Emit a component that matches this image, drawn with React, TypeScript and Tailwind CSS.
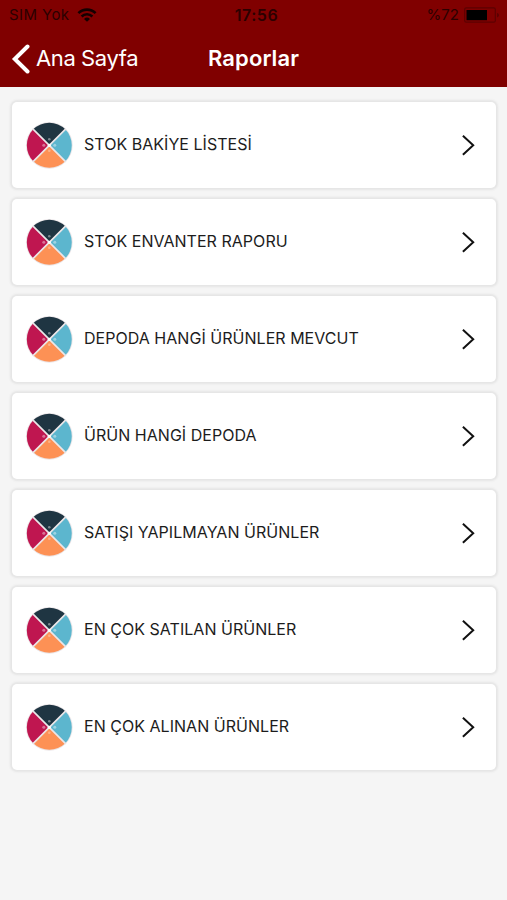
type Report = {
  id: number;
  title: string;
};

const reports: Report[] = [
  { id: 1, title: 'STOK BAKİYE LİSTESİ' },
  { id: 2, title: 'STOK ENVANTER RAPORU' },
  { id: 3, title: 'DEPODA HANGİ ÜRÜNLER MEVCUT' },
  { id: 4, title: 'ÜRÜN HANGİ DEPODA' },
  { id: 5, title: 'SATIŞI YAPILMAYAN ÜRÜNLER' },
  { id: 6, title: 'EN ÇOK SATILAN ÜRÜNLER' },
  { id: 7, title: 'EN ÇOK ALINAN ÜRÜNLER' },
];

function WifiIcon() {
  return (
    <svg className="ml-[8px] h-[14px] w-5" viewBox="0 0 20 14" fill="none" stroke="#140000">
      <path d="M1.4 5.2a12.2 12.2 0 0 1 17.2 0" strokeWidth="2.6" />
      <path d="M4.6 8.5a7.7 7.7 0 0 1 10.8 0" strokeWidth="2.5" />
      <path d="M10 13.8 7 10.9a4.3 4.3 0 0 1 6 0z" fill="#140000" stroke="none" />
    </svg>
  );
}

function BatteryIcon() {
  return (
    <svg className="ml-[5px] h-4 w-9" viewBox="0 0 36 16">
      <rect x="0.7" y="0.8" width="30.6" height="14.4" rx="1.5" fill="none" stroke="#5c0000" strokeWidth="1.2" />
      <rect x="2.5" y="3" width="20.5" height="10.2" fill="#000" />
      <path d="M33 6v4.4c1.3-.4 2-1.2 2-2.2s-.7-1.8-2-2.2z" fill="#5c0000" />
    </svg>
  );
}

function PieIcon() {
  return (
    <svg className="size-12 shrink-0" viewBox="0 0 48 48">
      <g transform="translate(.3 .3)">
        <circle cx="24" cy="24" r="23.4" fill="#ebe6e8" />
        <path d="M24 24 8 8a23 23 0 0 1 32 0z" fill="#1f3542" />
        <path d="M24 24 40 8a23 23 0 0 1 0 32z" fill="#5cb6ce" />
        <path d="M24 24 40 40a23 23 0 0 1-32 0z" fill="#fd9155" />
        <path d="M24 24 8 40a23 23 0 0 1 0-32z" fill="#bf1650" />
        <path d="M7.5 7.5l33 33M40.5 7.5l-33 33" stroke="#ebe6e8" strokeWidth="1.7" />
        <g fill="#fff">
          <circle cx="24" cy="24" r="1.6" />
          <circle cx="24" cy="18" r="1.3" opacity=".4" />
          <circle cx="18.5" cy="24" r="1.5" opacity=".4" />
          <circle cx="29.5" cy="24" r="1.5" opacity=".4" />
          <circle cx="24" cy="29.5" r="1.3" opacity=".3" />
        </g>
      </g>
    </svg>
  );
}

function Header() {
  return (
    <header className="h-[87px] bg-[#800000]">
      <div className="grid h-[30px] grid-cols-3 items-center px-[7px] text-[15px] text-[#2b0000]">
        <div className="flex items-center pl-[2px]">
          <span className="tracking-[0.4px]">SIM Yok</span>
          <WifiIcon />
        </div>
        <div className="pl-[6px] text-center text-base font-semibold tracking-[0.5px]">17:56</div>
        <div className="flex items-center justify-end">
          <span>%72</span>
          <BatteryIcon />
        </div>
      </div>
      <div className="grid h-[57px] grid-cols-3 items-center px-[11px] text-white">
        <button className="flex items-center text-[22px] tracking-[-0.4px] whitespace-nowrap">
          <svg className="mr-[6px] h-[30px] w-[19px] shrink-0" viewBox="0 0 19 30" fill="none" stroke="currentColor" strokeWidth="4">
            <path d="M16.5 2.5 3.8 15 16.5 27.5" strokeLinecap="round" />
          </svg>
          Ana Sayfa
        </button>
        <h1 className="text-center text-[22px] font-semibold tracking-[0.1px]">Raporlar</h1>
      </div>
    </header>
  );
}

function ReportRow({ title }: { title: string }) {
  return (
    <li className="flex h-[86px] items-center rounded-[5px] bg-white pr-[20px] pl-[13px] shadow-[0_0_2px_2px_#e5e5e5]">
      <PieIcon />
      <span className="ml-[11px] flex-1 pb-[2px] text-base tracking-[0.03px] text-[#1c1c1c]">{title}</span>
      <svg className="h-6 w-4 shrink-0" viewBox="0 0 16 24" fill="none" stroke="#111" strokeWidth="2">
        <path d="M2.9 2.7 13.2 12.2 2.9 21.7" />
      </svg>
    </li>
  );
}

export default function App() {
  return (
    <div className="h-[900px] w-[507px] overflow-hidden bg-[#f5f5f5] font-['Inter',sans-serif]">
      <Header />
      <ul className="flex flex-col gap-[11px] pt-[15px] pr-[11px] pl-[12px]">
        {reports.map((report) => (
          <ReportRow key={report.id} title={report.title} />
        ))}
      </ul>
    </div>
  );
}
